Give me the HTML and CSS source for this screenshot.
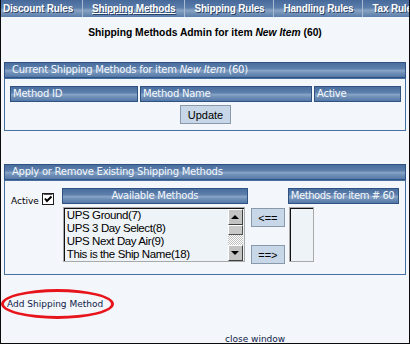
FILE: index.html
```html
<!DOCTYPE html>
<html lang="en">
<head>
    <meta charset="UTF-8">
    <title>Shipping Methods Admin</title>
    <link rel="stylesheet" href="styles.css">
</head>
<body>

    <div class="tabs">
        <a class="tab first">Discount Rules</a>
        <a class="tab current">Shipping Methods</a>
        <a class="tab">Shipping Rules</a>
        <a class="tab">Handling Rules</a>
        <a class="tab">Tax Rules</a>
    </div>

    <h1 class="page-title">Shipping Methods Admin for item <i>New Item</i> (60)</h1>

    <div class="panel">
        <div class="bar">Current Shipping Methods for item <i>New Item</i> (60)</div>
        <div class="panel-body">
            <div class="cols">
                <div class="col-head">Method ID</div>
                <div class="col-head">Method Name</div>
                <div class="col-head">Active</div>
            </div>
            <div class="center">
                <button class="btn update">Update</button>
            </div>
        </div>
    </div>

    <div class="panel second">
        <div class="bar">Apply or Remove Existing Shipping Methods</div>
        <div class="panel-body apply">
            <div class="active-cell">
                <span>Active</span>
                <svg class="check" width="12" height="12" viewBox="0 0 12 12">
                    <rect x="0.5" y="0.5" width="11" height="11" fill="#fff" stroke="#1c1c1c"/>
                    <path d="M1.5 1.5 H10.5" stroke="#555" stroke-width="1"/>
                    <path d="M3 5.5 L5 8 L9.5 3.5" fill="none" stroke="#000" stroke-width="2"/>
                </svg>
            </div>

            <div class="avail-col">
                <div class="col-head centered">Available Methods</div>
                <div class="listbox avail">
                    <div class="items">
                        <div>UPS Ground(7)</div>
                        <div>UPS 3 Day Select(8)</div>
                        <div>UPS Next Day Air(9)</div>
                        <div>This is the Ship Name(18)</div>
                    </div>
                    <div class="scrollbar">
                        <div class="sb-btn"><span class="arrow up"></span></div>
                        <div class="sb-thumb"></div>
                        <div class="sb-track"></div>
                        <div class="sb-btn"><span class="arrow down"></span></div>
                    </div>
                </div>
            </div>

            <div class="move-col">
                <button class="btn move">&lt;==</button>
                <button class="btn move">==&gt;</button>
            </div>

            <div class="item-col">
                <div class="col-head">Methods for item # 60</div>
                <div class="listbox assigned"></div>
            </div>
        </div>
    </div>

    <div class="add-row">
        <a class="add-link">Add Shipping Method</a>
    </div>

    <div class="close-row">close window</div>

</body>
</html>
```

FILE: styles.css
```css
body {
    margin: 0;
    height: 344px;
    box-sizing: border-box;
    border: 1px solid #0b0b0b;
    border-top: none;
    background: #f3f6fa;
    font-family: "DejaVu Sans", Verdana, sans-serif;
    font-size: 9px;
    color: #10204a;
    overflow: hidden;
}

/* top tab strip */
.tabs {
    display: flex;
    height: 17px;
    white-space: nowrap;
    overflow: hidden;
    background: linear-gradient(#46699a, #5a7dab 45%, #88a2c3 60%, #5a7da9);
}

.tab {
    font: bold 10px "Liberation Sans", Arial, sans-serif;
    letter-spacing: -0.2px;
    color: #fff;
    line-height: 17px;
    padding: 0 9px;
    border-right: 1px solid #a9bbd1;
    text-decoration: none;
    text-shadow: 1px 1px 0 #2c4468;
}

.tab.first {
    padding-left: 2px;
}

.tab.current {
    text-decoration: underline;
}

.page-title {
    margin: 9px 0 0;
    font: bold 10.3px/14px "Liberation Sans", Arial, sans-serif;
    color: #000;
    text-align: center;
}

/* panels */
.panel {
    margin: 22px 3px 0;
}

.panel.second {
    margin-top: 33px;
}

.bar, .col-head {
    box-sizing: border-box;
    height: 16px;
    border: 1px solid #2e5282;
    background: linear-gradient(#4a6e9e, #5c7fac 40%, #8aa5c6 55%, #7090b8 70%, #5479a7);
    color: #f4f8fc;
    font-size: 10px;
    letter-spacing: -0.25px;
    line-height: 14px;
    white-space: nowrap;
    overflow: hidden;
}

.bar {
    padding-left: 7px;
}

.panel-body {
    border: 1px solid #45709f;
    padding: 7px 4px 6px 5px;
}

.cols {
    display: grid;
    grid-template-columns: 128px 172px 87px;
    gap: 2px;
}

.col-head {
    padding-left: 2px;
}

.col-head.centered {
    text-align: center;
    padding-left: 0;
}

.center {
    margin-top: 3px;
    text-align: center;
}

.btn {
    font: 11px "Liberation Sans", Arial, sans-serif;
    color: #000;
    background: #c7d7e7;
    border: 1px solid #8899ab;
    padding: 0;
    height: 19px;
}

.update {
    width: 51px;
}

/* apply / remove */
.panel-body.apply {
    display: flex;
    align-items: flex-start;
    padding: 7px 4px 10px 5px;
}

.active-cell {
    display: flex;
    align-items: flex-end;
    margin: 5px 0 0 1px;
    color: #000;
}

.check {
    margin-left: 3px;
    margin-bottom: 1px;
}

.avail-col {
    width: 186px;
    margin-left: 8px;
}

.listbox {
    box-sizing: border-box;
    height: 55px;
    margin: 3px 0 0 1px;
    border: 1px solid #a9a9a9;
    box-shadow: inset 1px 1px 0 #111;
    background: #eef3f7;
}

.listbox.avail {
    width: 182px;
    display: flex;
    padding: 1px 1px 0 1px;
}

.items {
    flex: 1;
    padding: 0 0 0 2px;
    font: 11.5px/13px "Liberation Sans", Arial, sans-serif;
    letter-spacing: -0.4px;
    color: #000;
    white-space: nowrap;
    overflow: hidden;
}

.scrollbar {
    width: 15px;
    display: flex;
    flex-direction: column;
}

.sb-btn {
    height: 16px;
    box-sizing: border-box;
    background: #c3c3c3;
    border: 1px solid;
    border-color: #fff #404040 #404040 #fff;
    display: flex;
    align-items: center;
    justify-content: center;
}

.arrow {
    width: 0;
    height: 0;
    border-left: 4px solid transparent;
    border-right: 4px solid transparent;
}

.arrow.up {
    border-bottom: 4px solid #000;
}

.arrow.down {
    border-top: 4px solid #000;
}

.sb-thumb {
    height: 10px;
    box-sizing: border-box;
    background: #c8c8c8;
    border: 1px solid;
    border-color: #fff #505050 #505050 #fff;
}

.sb-track {
    flex: 1;
    background: repeating-conic-gradient(#c0c0c0 0 25%, #fff 0 50%) 0 0 / 2px 2px;
}

.move-col {
    width: 34px;
    margin-left: 3px;
    padding-top: 20px;
    display: flex;
    flex-direction: column;
    gap: 18px;
}

.btn.move {
    width: 34px;
}

.item-col {
    width: 111px;
    margin-left: 3px;
}

.item-col .col-head {
    letter-spacing: -0.45px;
}

.listbox.assigned {
    width: 25px;
}

/* links */
.add-row {
    margin-top: 14px;
}

.add-link {
    display: inline-block;
    border: 3px solid #e8141c;
    border-radius: 50%;
    padding: 6px 8px 6px 3px;
    line-height: 12px;
    color: #10204a;
}

.close-row {
    margin-top: 14px;
    padding-left: 224px;
    line-height: 12px;
}
```
